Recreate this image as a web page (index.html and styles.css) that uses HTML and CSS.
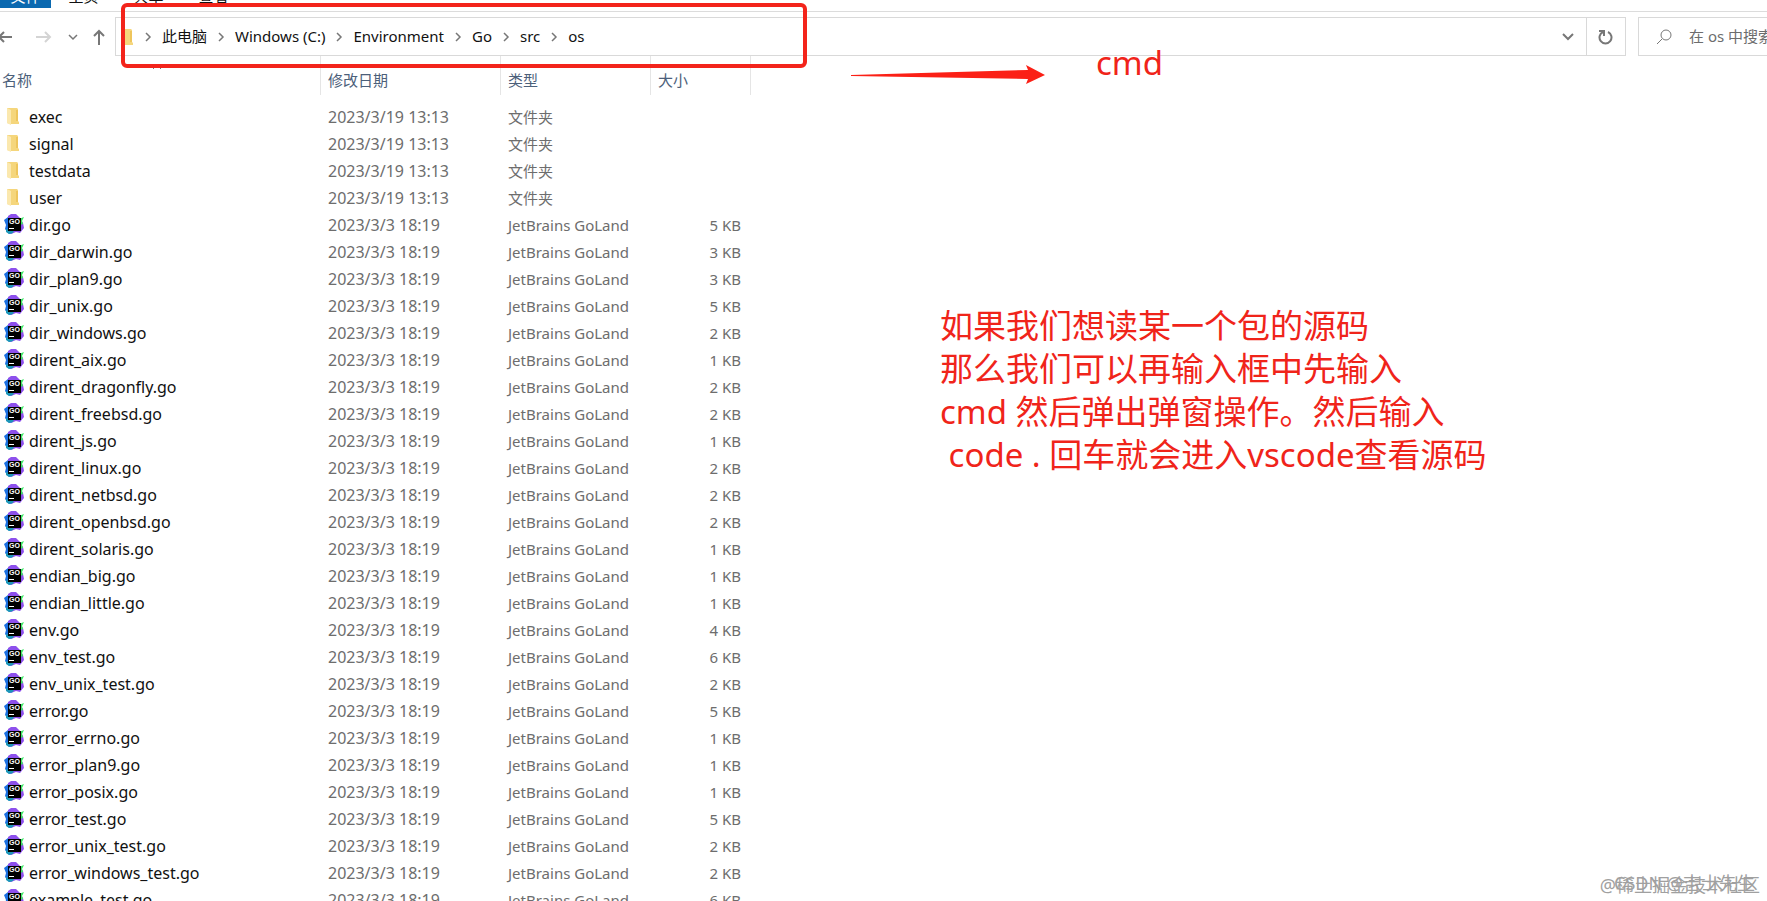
FILE: index.html
```html
<!DOCTYPE html>
<html lang="zh-CN">
<head>
    <meta charset="UTF-8">
    <meta name="viewport" content="width=device-width, initial-scale=1.0">
    <title>os</title>
    <link rel="stylesheet" href="styles.css">
</head>
<body>
    <svg class="sprite" aria-hidden="true">
        <symbol id="icon-folder" viewBox="0 0 12 18">
            <path d="M0 1h10l1 1v12l1 1v2H3L0 16z" fill="#f5d67c"/>
            <path d="M0 1l4 2v15l-4-2z" fill="#fbe8ae"/>
            <path d="M9 3h2v11H9z" fill="#eec55c"/>
        </symbol>
        <symbol id="icon-goland" viewBox="0 0 20 20">
            <path d="M4 2l3-2h5l4 4 3 5 1 5-4 5-4-1-5 2-4-3z" fill="#8d50ec"/>
            <path d="M0 6l4-3 1 14 3 2-3 1-4-5 1-4z" fill="#1a6fe0"/>
            <path d="M15 5l5-2-2 4 1 3-3 1z" fill="#3be763"/>
            <path d="M2 15l8 1-1 3-4 1-3-2z" fill="#1c96b8"/>
            <path d="M4 4h13v13H4z" fill="#000"/>
            <text x="5" y="10" class="go-text">GO</text>
            <path d="M5 14h5v1H5z" fill="#fff"/>
        </symbol>
        <symbol id="icon-chevron" viewBox="0 0 8 10">
            <path d="M2 1l4 4-4 4" fill="none" stroke="#777" stroke-width="1.500"/>
        </symbol>
    </svg>

    <nav class="ribbon">
        <a href="#" class="tab file-tab">文件</a>
        <a href="#" class="tab">主页</a>
        <a href="#" class="tab">共享</a>
        <a href="#" class="tab">查看</a>
    </nav>

    <div class="toolbar">
        <div class="nav-buttons">
            <button type="button" class="back" aria-label="后退">
                <svg width="16" height="14" viewBox="0 0 16 14"><path d="M15 7H2M7 2L2 7l5 5" fill="none" stroke="#777" stroke-width="2"/></svg>
            </button>
            <button type="button" class="forward" aria-label="前进">
                <svg width="16" height="14" viewBox="0 0 16 14"><path d="M0 7h14M9 2l5 5-5 5" fill="none" stroke="#d4d4d4" stroke-width="2"/></svg>
            </button>
            <button type="button" class="recent" aria-label="最近浏览的位置">
                <svg width="10" height="8" viewBox="0 0 10 8"><path d="M1 2l4 4 4-4" fill="none" stroke="#777" stroke-width="1.500"/></svg>
            </button>
            <button type="button" class="up" aria-label="上移">
                <svg width="12" height="16" viewBox="0 0 12 16"><path d="M6 16V2M1 7l5-5 5 5" fill="none" stroke="#777" stroke-width="2"/></svg>
            </button>
        </div>
        <div class="address-bar">
            <svg class="address-icon"><use href="#icon-folder"/></svg>
            <div class="crumbs">
                <svg class="chevron"><use href="#icon-chevron"/></svg><a href="#">此电脑</a>
                <svg class="chevron"><use href="#icon-chevron"/></svg><a href="#">Windows (C:)</a>
                <svg class="chevron"><use href="#icon-chevron"/></svg><a href="#">Environment</a>
                <svg class="chevron"><use href="#icon-chevron"/></svg><a href="#">Go</a>
                <svg class="chevron"><use href="#icon-chevron"/></svg><a href="#">src</a>
                <svg class="chevron"><use href="#icon-chevron"/></svg><a href="#">os</a>
            </div>
            <button type="button" class="history" aria-label="上一个位置">
                <svg width="12" height="8" viewBox="0 0 12 8"><path d="M1 1l5 5 5-5" fill="none" stroke="#777" stroke-width="2"/></svg>
            </button>
            <button type="button" class="refresh" aria-label="刷新">
                <svg width="16" height="16" viewBox="0 0 16 16"><path d="M10 3a6 6 0 1 1-5 0M1 2h5v5" fill="none" stroke="#777" stroke-width="2"/></svg>
            </button>
        </div>
        <label class="search">
            <svg width="16" height="16" viewBox="0 0 16 16"><circle cx="10" cy="6" r="5" fill="none" stroke="#777"/><path d="M6 10l-5 5" stroke="#777"/></svg>
            <input type="text" aria-label="搜索" placeholder="在 os 中搜索">
        </label>
    </div>

    <main class="content">
        <table class="files">
            <thead>
                <tr>
                    <th class="col-name">名称<svg class="sort" viewBox="0 0 10 6"><path d="M1 5l4-4 4 4" fill="none" stroke="#777"/></svg></th>
                    <th class="col-date">修改日期</th>
                    <th class="col-type">类型</th>
                    <th class="col-size">大小</th>
                </tr>
            </thead>
            <tbody id="file-list"></tbody>
        </table>
        <p class="note">如果我们想读某一个包的源码
那么我们可以再输入框中先输入
cmd 然后弹出弹窗操作。然后输入
 code . 回车就会进入vscode查看源码</p>
    </main>

    <div class="highlight"></div>
    <svg class="arrow" viewBox="0 0 194 20"><path d="M0 10L177 5l-2-5 19 10-19 9 2-5L0 11z" fill="#fb2016"/></svg>
    <div class="cmd-label">cmd</div>
    <div class="watermark juejin">@稀土掘金技术社区</div>
    <div class="watermark csdn">CSDN @吉士先生</div>

    <script src="files.js"></script>
</body>
</html>
```
FILE: styles.css
```css
* {
    box-sizing: border-box;
}

html, body {
    height: 100%;
}

body {
    margin: 0;
    display: flex;
    flex-direction: column;
    position: relative;
    overflow: hidden;
    background: #fff;
    color: #111;
    font-family: 'Noto Sans', 'Noto Sans CJK SC', sans-serif;
    font-size: 15px;
    line-height: 27px;
}

a {
    color: inherit;
    text-decoration: none;
}

button {
    padding: 0;
    border: none;
    background: none;
    display: flex;
    align-items: center;
    justify-content: center;
}

.sprite {
    display: none;
}

.go-text {
    fill: #fff;
    font-family: 'Liberation Sans', sans-serif;
    font-size: 7px;
    font-weight: bold;
}

/* ribbon tabs, scrolled almost out of view */
.ribbon {
    flex: none;
    height: 12px;
    padding-bottom: 3px;
    display: flex;
    align-items: flex-end;
    overflow: hidden;
    border-bottom: 1px solid #dcdcdc;
}

.tab {
    width: 65px;
    padding-bottom: 2px;
    line-height: 20px;
    text-align: center;
}

.file-tab {
    width: 51px;
    background: #0b69b0;
    color: #fff;
}

/* toolbar */
.toolbar {
    flex: none;
    display: flex;
    height: 44px;
    padding-top: 5px;
}

.nav-buttons {
    width: 115px;
    display: flex;
    align-items: center;
    flex: none;
}

.back {
    margin-left: -3px;
}

.forward {
    margin-left: 23px;
}

.recent {
    margin-left: 16px;
}

.up {
    margin-left: 15px;
}

.address-bar {
    flex: 1;
    display: flex;
    align-items: center;
    border: 1px solid #d9d9d9;
    margin-right: 12px;
}

.address-icon {
    width: 12px;
    height: 18px;
    margin: 0 11px 0 5px;
}

.crumbs {
    flex: 1;
    display: flex;
    align-items: center;
}

.crumbs a {
    margin-right: 10px;
}

.chevron {
    width: 8px;
    height: 10px;
    margin-right: 10px;
}

.history {
    width: 36px;
    height: 37px;
}

.refresh {
    width: 39px;
    height: 37px;
    border-left: 1px solid #d9d9d9;
}

.search {
    width: 129px;
    flex: none;
    display: flex;
    align-items: center;
    padding-left: 17px;
    border: 1px solid #d9d9d9;
    border-right: none;
}

.search svg {
    flex: none;
}

.search input {
    min-width: 0;
    flex: 1;
    margin-left: 17px;
    padding: 0;
    border: none;
    outline: none;
    font: inherit;
}

.search input::placeholder {
    color: #6d6d6d;
}

/* file list */
.content {
    flex: 1;
    min-height: 0;
    display: flex;
    align-items: flex-start;
}

.files {
    width: 751px;
    flex: none;
    table-layout: fixed;
    border-spacing: 0;
    color: #6d6d6d;
}

.files th {
    height: 39px;
    padding: 11px 0 1px 7px;
    border-right: 1px solid #e5e5e5;
    color: #4c607a;
    font-weight: normal;
    text-align: left;
    position: relative;
}

.files thead::after {
    content: '';
    display: block;
    height: 9px;
}

.files .col-name {
    width: 321px;
    padding-left: 2px;
}

.col-date {
    width: 180px;
}

.col-type {
    width: 150px;
}

.col-size {
    width: 100px;
}

.sort {
    position: absolute;
    top: 8px;
    left: 152px;
    width: 10px;
    height: 6px;
}

.files td {
    height: 27px;
    padding: 0 0 0 7px;
    white-space: nowrap;
}

.files td.name {
    padding-left: 4px;
    color: #111;
    font-size: 16px;
}

.files td.date {
    font-size: 16px;
}

.name span {
    display: flex;
    align-items: center;
    gap: 5px;
}

.name svg {
    width: 20px;
    height: 20px;
    margin-bottom: 3px;
}

.name .folder {
    width: 12px;
    height: 18px;
    margin: 0 5px 3px 3px;
}

.files td.size {
    padding-right: 10px;
    text-align: right;
}

/* red annotations */
.note {
    margin: 248px 0 0 189px;
    color: #f0241a;
    font-size: 33px;
    line-height: 43px;
    white-space: pre;
}

.highlight {
    position: absolute;
    top: 3px;
    left: 121px;
    width: 686px;
    height: 65px;
    border: 4px solid #f3241b;
    border-radius: 6px;
}

.arrow {
    position: absolute;
    top: 65px;
    left: 851px;
    width: 194px;
    height: 20px;
}

.cmd-label {
    position: absolute;
    top: 41px;
    left: 1096px;
    color: #f0241a;
    font-size: 33px;
    line-height: 43px;
}

.watermark {
    position: absolute;
    white-space: nowrap;
    color: #a0a0a0;
}

.juejin {
    right: 7px;
    bottom: 2px;
    font-size: 18px;
}

.csdn {
    right: 12px;
    bottom: 4px;
    font-size: 18px;
}
```
FILE: files.js
```js
const files = [
    ['exec'],
    ['signal'],
    ['testdata'],
    ['user'],
    ['dir.go', 5],
    ['dir_darwin.go', 3],
    ['dir_plan9.go', 3],
    ['dir_unix.go', 5],
    ['dir_windows.go', 2],
    ['dirent_aix.go', 1],
    ['dirent_dragonfly.go', 2],
    ['dirent_freebsd.go', 2],
    ['dirent_js.go', 1],
    ['dirent_linux.go', 2],
    ['dirent_netbsd.go', 2],
    ['dirent_openbsd.go', 2],
    ['dirent_solaris.go', 1],
    ['endian_big.go', 1],
    ['endian_little.go', 1],
    ['env.go', 4],
    ['env_test.go', 6],
    ['env_unix_test.go', 2],
    ['error.go', 5],
    ['error_errno.go', 1],
    ['error_plan9.go', 1],
    ['error_posix.go', 1],
    ['error_test.go', 5],
    ['error_unix_test.go', 2],
    ['error_windows_test.go', 2],
    ['example_test.go', 6]
];

const fileList = document.getElementById('file-list');

files.forEach(([name, size]) => {
    const row = document.createElement('tr');
    const icon = size
        ? '<svg><use href="#icon-goland"/></svg>'
        : '<svg class="folder"><use href="#icon-folder"/></svg>';
    row.innerHTML = `
        <td class="name"><span>${icon}${name}</span></td>
        <td class="date">${size ? '2023/3/3 18:19' : '2023/3/19 13:13'}</td>
        <td>${size ? 'JetBrains GoLand' : '文件夹'}</td>
        <td class="size">${size ? size + ' KB' : ''}</td>
    `;
    fileList.appendChild(row);
});
```
